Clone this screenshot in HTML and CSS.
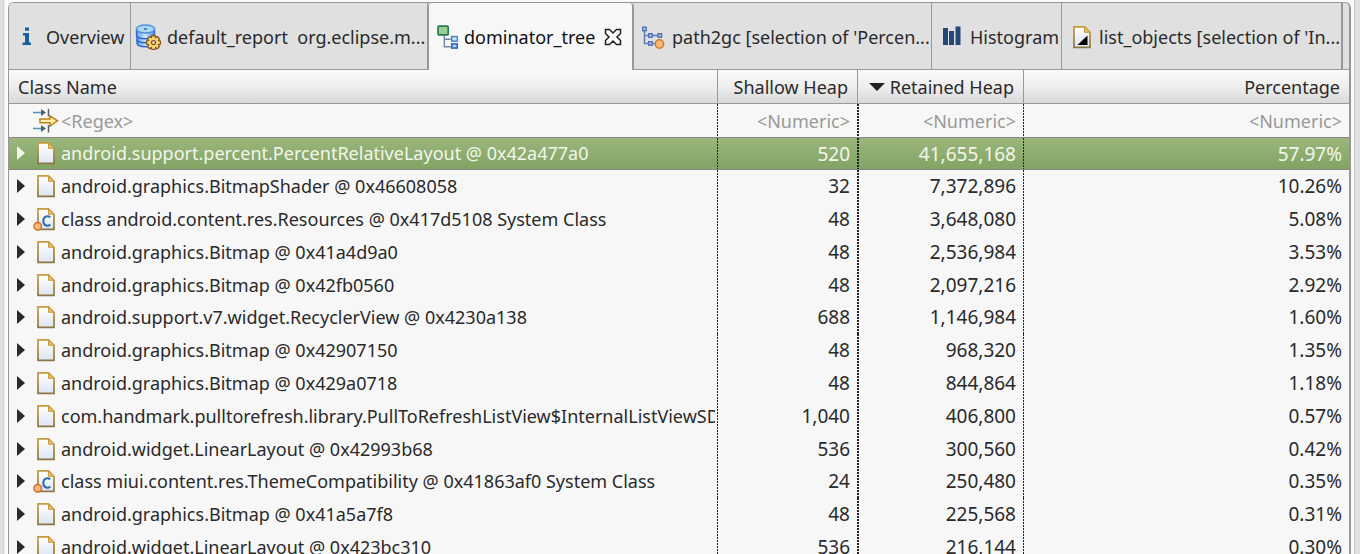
FILE: index.html
```
<!DOCTYPE html>
<html lang="en">
<head>
<meta charset="utf-8">
<title>Memory Analyzer</title>
<link rel="stylesheet" href="styles.css">
</head>
<body>
<svg class="sprite" aria-hidden="true">
  <defs>
    <linearGradient id="paper" x1="0" y1="0" x2="0" y2="1"><stop offset="0" stop-color="#fff"/><stop offset="1" stop-color="#dce5f5"/></linearGradient>
    <linearGradient id="edge" x1="0" y1="0" x2="0" y2="1"><stop offset="0" stop-color="#c89a3c"/><stop offset="1" stop-color="#8a7640"/></linearGradient>
    <linearGradient id="disk" x1="0" y1="0" x2="1" y2="0"><stop offset="0" stop-color="#5f9be8"/><stop offset=".5" stop-color="#cdeafa"/><stop offset="1" stop-color="#4a86dc"/></linearGradient>
    <symbol id="file" viewBox="0 0 24 24">
      <path d="M5 1.800h10.500l5.500 5.500v15H5z" fill="url(#paper)" stroke="url(#edge)" stroke-width="1.700"/>
      <path d="M15.500 2v5.300H21z" fill="#e6c172" stroke="#c89a3c"/>
    </symbol>
    <symbol id="classfile" viewBox="0 0 24 24">
      <use href="#file"/>
      <path d="M17.300 10.200c-3-2.200-7-.7-7 3.700s4 5.900 7 3.700" fill="none" stroke="#2f6cab" stroke-width="2"/>
      <circle cx="4.700" cy="19.300" r="3.800" fill="#fbb87a" stroke="#cf732b" stroke-width="1.500"/>
    </symbol>
  </defs>
</svg>
<main class="frame">
  <div class="tabs" role="tablist">
    <button class="tab tab-info" role="tab"><svg class="icon" viewBox="0 0 24 24"><path d="M9 2.500h4v3.300H9zM7 8h6v9.500h2V20H6.500v-2.500H9v-7H7z" fill="#17609f"/></svg><span>Overview</span></button>
    <button class="tab tab-report" role="tab"><svg class="icon wide" viewBox="0 0 26 26">
      <g fill="url(#disk)" stroke="#2d66cf" stroke-width="1.400"><path d="M2 16v3c0 5 17 5 17 0v-3z"/><path d="M2 11v4c0 5 17 5 17 0v-4z"/><path d="M1.500 5v6c0 5 18 5 18 0V5z"/><ellipse cx="10.500" cy="5" rx="9" ry="4" fill="#a8d8f2" stroke="#4d8fda"/></g>
      <path d="M9 5h3" stroke="#2d66cf" stroke-width="1.500"/>
      <path d="M17 11.500h3l.6 2 1.800-.9 2 2-.9 1.900 2 .6v3l-2 .6.900 1.900-2 2-1.800-.9-.6 2h-3l-.6-2-1.800.9-2-2 .9-1.900-2-.6v-3l2-.6-.9-1.900 2-2 1.800.9z" fill="#f7d66f" stroke="#8b5128" stroke-width="1.300"/><circle cx="18.500" cy="18.600" r="2" fill="#fff3cf" stroke="#8b5128" stroke-width="1.300"/></svg><span>default_report&nbsp; org.eclipse.m...</span></button>
    <div class="tab tab-active"><button class="tab-label" role="tab" aria-selected="true"><svg class="icon" viewBox="0 0 24 26">
      <path d="M8 11v12.500h7M8 15.500h7" fill="none" stroke="#6f86aa" stroke-width="1.500"/><rect x="1.200" y="1.200" width="11" height="9.500" rx="1" fill="#9bcf90" stroke="#277a50" stroke-width="1.800"/><rect x="16" y="12.500" width="6" height="5" fill="#bfe5fb" stroke="#3f82d0" stroke-width="1.500"/><rect x="16" y="20.500" width="6" height="4.500" fill="#a6d4fa" stroke="#2354b8" stroke-width="1.500"/></svg><span>dominator_tree</span></button><button class="close" aria-label="Close dominator_tree"><svg viewBox="0 0 18 18"><path d="M1.500 1.500h4L9 5l3.500-3.500h4v4L13 9l3.500 3.500v4h-4L9 13l-3.500 3.500h-4v-4L5 9 1.500 5.500z" fill="#fff" stroke="#222" stroke-width="1.500"/></svg></button></div>
    <button class="tab tab-path" role="tab"><svg class="icon" viewBox="0 0 24 24">
      <path d="M3.500 5v13.500H15M4 10.500h16" fill="none" stroke="#5f7db5" stroke-width="1.500"/><g fill="#b8cdf0" stroke="#4d71b4" stroke-width="1.400"><rect x="1.700" y="2.200" width="3.500" height="3.500"/><rect x="7.700" y="8.700" width="3.500" height="3.500"/><rect x="17" y="8.700" width="3.500" height="3.500"/><rect x="7.700" y="16.700" width="3.500" height="3.500"/></g><circle cx="18.500" cy="19" r="4.200" fill="#fbb87a" stroke="#cf7d27" stroke-width="1.500"/></svg><span>path2gc [selection of 'Percen...</span></button>
    <button class="tab tab-histogram" role="tab"><svg class="icon" viewBox="0 0 24 24"><path d="M3 3h5v17H3zM9 6h5v14H9zM15.500 1.500h5V20h-5z" fill="#244878"/></svg><span>Histogram</span></button>
    <button class="tab tab-list" role="tab"><svg class="icon" viewBox="0 0 24 24"><use href="#file"/><path d="M18.500 10.500V20H8.500z" fill="#000"/></svg><span>list_objects [selection of 'In...</span></button>
  </div>
  <table class="tree">
    <colgroup><col class="c-name"><col class="c-shallow"><col class="c-retained"><col></colgroup>
    <thead>
      <tr class="head"><th>Class Name</th><th>Shallow Heap</th><th aria-sort="descending"><svg class="sort" viewBox="0 0 16 8"><path d="M0 0h16L8 8z"/></svg>Retained Heap</th><th>Percentage</th></tr>
      <tr class="filters">
        <td><div class="name"><svg class="icon filter" viewBox="0 0 26 26"><path d="M0 4.500h9M0 20.500h9" stroke="#4f92bd" stroke-width="1.500"/><path d="M8 1l5 3.500L8 8zM8 17l5 3.500L8 24z" fill="#56616e"/><path d="M15.500 1v7.500M15.500 17v7.500" stroke="#56616e" stroke-width="1.500"/><path d="M7 11h10V7.800l7.500 5L17 18v-3.200H7z" fill="#fff0ae" stroke="#bd8119" stroke-width="1.500"/></svg><input type="text" placeholder="&lt;Regex&gt;" aria-label="Class Name filter"></div></td>
        <td><input type="text" placeholder="&lt;Numeric&gt;" aria-label="Shallow Heap filter"></td>
        <td><input type="text" placeholder="&lt;Numeric&gt;" aria-label="Retained Heap filter"></td>
        <td><input type="text" placeholder="&lt;Numeric&gt;" aria-label="Percentage filter"></td>
      </tr>
    </thead>
    <tbody id="rows"></tbody>
  </table>
</main>
<script src="rows.js"></script>
</body>
</html>
```
FILE: styles.css
```
* { box-sizing: border-box; }
body {
  margin: 0;
  height: 100vh;
  overflow: hidden;
  padding: 2px 9px 0 8px;
  background: linear-gradient(to right, #e0e0e0 3px, #cfcfcf 3px 4px, #ececec 4px 5px, #fafafa 5px calc(100% - 6px), #c4c4c4 calc(100% - 6px) calc(100% - 5px), #e0e0e0 calc(100% - 5px));
  color: #2a2a2a;
  font: 18px/26px "Noto Sans", sans-serif;
}
button, input { font: inherit; color: inherit; border: 0; padding: 0; background: none; }
.sprite { position: absolute; width: 0; height: 0; }
.frame {
  height: 100%;
  overflow: hidden;
  border: 1px solid #969696;
  border-right-width: 2px;
  border-bottom: 0;
  border-radius: 6px 6px 0 0;
  background: #f7f7f7;
}
.tabs { display: flex; height: 67px; background: #e0e0e0; border-bottom: 1px solid #999; }
.tab {
  display: flex;
  flex: none;
  align-items: center;
  gap: 6px;
  padding-top: 1px;
  border-right: 1px solid #999;
  white-space: nowrap;
  overflow: hidden;
}
.icon { width: 24px; height: 24px; flex: none; }
.icon.wide, .icon.filter { width: 26px; height: 26px; }
.tab-info { width: 122px; padding-left: 7px; }
.tab-report { width: 297px; padding-left: 4px; }
.tab-active {
  width: 206px;
  height: 67px;
  padding-left: 7px;
  gap: 9px;
  background: #f7f7f7;
  border: 1px solid #999;
  border-width: 0 2px 0 1px;
  border-radius: 4px 4px 0 0;
  color: #111;
}
.tab-label { display: flex; align-items: center; gap: 4px; }
.close { display: flex; width: 18px; height: 18px; }
.tab-path { width: 298px; padding-left: 7px; gap: 7px; }
.tab-histogram { width: 130px; padding-left: 8px; gap: 6px; }
.tab-list { width: 281px; padding-left: 7px; gap: 6px; border-right-width: 2px; }

.tree { width: 100%; table-layout: fixed; border-spacing: 0; }
.c-name { width: 708px; }
.c-shallow { width: 140px; }
.c-retained { width: 166px; }
th, td { height: 33px; padding: 0 7px; text-align: right; font-weight: normal; white-space: nowrap; overflow: hidden; }
th:first-child, td:first-child { text-align: left; }
.head th {
  height: 34px;
  padding: 0 9px;
  background: linear-gradient(#fafafa, #eeeeee 50%, #d9d9d9);
  border-bottom: 1px solid #999;
  border-left: 1px solid #999;
}
.head th:first-child { border-left: 0; }
td { background: repeating-linear-gradient(#222 0 2px, transparent 2px 3px) left / 1px 100% no-repeat; }
td:nth-child(3) { background-size: 2px 100%; }
td:first-child { padding: 0 2px 0 8px; background: none; }
tbody td { padding-bottom: 2px; font-size: 19px; }
tbody td:first-child { padding-bottom: 2px; font-size: 18px; }
.filters td { height: 34px; border-bottom: 1px solid #888; }
.filters input { display: block; width: 100%; text-align: inherit; outline: 0; }
::placeholder { color: #999; opacity: 1; }
.sort { width: 16px; height: 8px; margin-right: 5px; vertical-align: 3px; fill: #222; }
.name { display: flex; align-items: center; overflow: hidden; }
.filters .name { padding-left: 16px; gap: 2px; }
.name .icon { margin-right: 4px; }
.filters .icon { margin-right: 0; }
.expand { flex: none; width: 8px; height: 16px; margin-right: 8px; display: flex; }
.expand svg { width: 8px; height: 16px; fill: currentColor; }
tbody tr:nth-child(5n + 1) td { height: 32px; }
.selected { background: linear-gradient(#9ab67c, #82a363); color: #f2f6ec; }
.selected td { padding-bottom: 0; border-bottom: 1px solid #888; }
```
FILE: rows.js
```
const rows = [
  ["android.support.percent.PercentRelativeLayout @ 0x42a477a0", "520", "41,655,168", "57.97%"],
  ["android.graphics.BitmapShader @ 0x46608058", "32", "7,372,896", "10.26%"],
  ["class android.content.res.Resources @ 0x417d5108 System Class", "48", "3,648,080", "5.08%"],
  ["android.graphics.Bitmap @ 0x41a4d9a0", "48", "2,536,984", "3.53%"],
  ["android.graphics.Bitmap @ 0x42fb0560", "48", "2,097,216", "2.92%"],
  ["android.support.v7.widget.RecyclerView @ 0x4230a138", "688", "1,146,984", "1.60%"],
  ["android.graphics.Bitmap @ 0x42907150", "48", "968,320", "1.35%"],
  ["android.graphics.Bitmap @ 0x429a0718", "48", "844,864", "1.18%"],
  ["com.handmark.pulltorefresh.library.PullToRefreshListView$InternalListViewSDK9", "1,040", "406,800", "0.57%"],
  ["android.widget.LinearLayout @ 0x42993b68", "536", "300,560", "0.42%"],
  ["class miui.content.res.ThemeCompatibility @ 0x41863af0 System Class", "24", "250,480", "0.35%"],
  ["android.graphics.Bitmap @ 0x41a5a7f8", "48", "225,568", "0.31%"],
  ["android.widget.LinearLayout @ 0x423bc310", "536", "216,144", "0.30%"]
];
document.getElementById("rows").innerHTML = rows.map(([name, shallow, retained, percent], i) => `
  <tr class="${i === 0 ? "selected" : ""}">
    <td><div class="name"><button class="expand" aria-label="Expand"><svg viewBox="0 0 8 16"><path d="M0 1v14l8-7z"/></svg></button><svg class="icon" viewBox="0 0 24 24"><use href="#${name.startsWith("class ") ? "classfile" : "file"}"/></svg><span>${name}</span></div></td>
    <td>${shallow}</td><td>${retained}</td><td>${percent}</td>
  </tr>`).join("");
```
